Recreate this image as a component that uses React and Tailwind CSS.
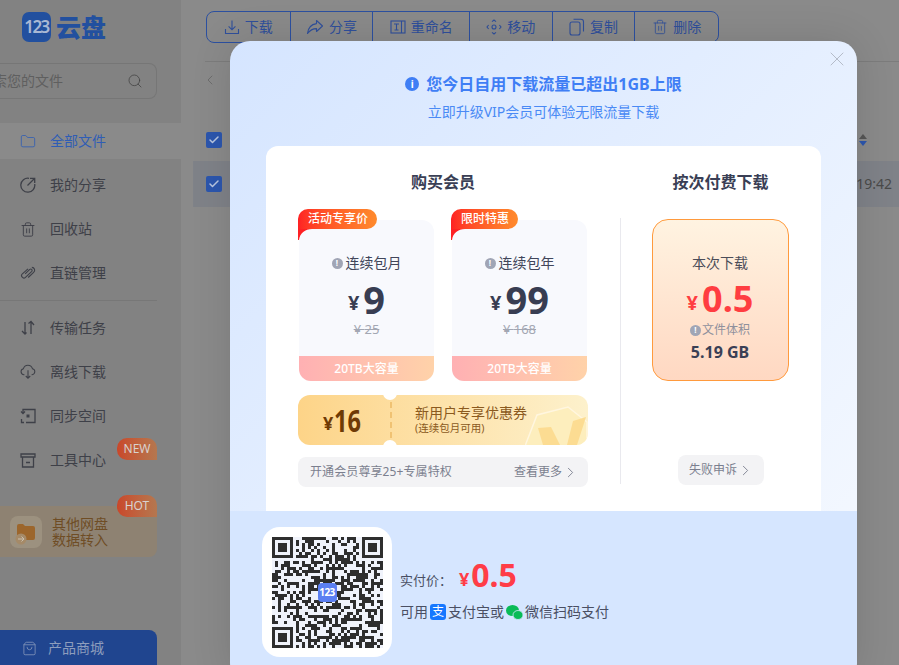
import React from 'react';
import {
  Check, ChevronLeft, ChevronRight, Folder, Search, ShoppingBag, Trash2, X,
} from 'lucide-react';

const FONT = { fontFamily: '"Noto Sans", "Noto Sans CJK SC", sans-serif' };

const DownloadIcon = () => (
  <svg width="16" height="16" viewBox="0 0 16 16" fill="none" stroke="currentColor" strokeWidth="1.1">
    <path d="M8 1.5v9M4.6 7.4 8 10.8l3.4-3.4M1.5 10v4.5h13V10" />
  </svg>
);
const ShareIcon = () => (
  <svg width="18" height="16" viewBox="0 0 18 16" fill="none" stroke="currentColor" strokeWidth="1.1" strokeLinejoin="round">
    <path d="M10.5 1.5 16.5 7l-6 5.500V9.600C6.500 9.600 4 11 1.500 14.500 2 9.500 5 5.400 10.500 4.600z" />
  </svg>
);
const RenameIcon = () => (
  <svg width="16" height="16" viewBox="0 0 16 16" fill="none" stroke="currentColor" strokeWidth="1.1">
    <rect x="1" y="2" width="14" height="12" />
    <path d="M4 5h5M6.500 5v6M4.500 11h4M11.500 2v12" />
  </svg>
);
const MoveIcon = () => (
  <svg width="16" height="16" viewBox="0 0 16 16" fill="none" stroke="currentColor" strokeWidth="1.1">
    <path d="M6 2.600 8 1l2 1.600M13.400 6 15 8l-1.600 2M10 13.400 8 15l-2-1.600M2.600 10 1 8l1.600-2" />
    <circle cx="8" cy="8" r="2" />
  </svg>
);
const CopyIcon = () => (
  <svg width="16" height="18" viewBox="0 0 16 18" fill="none" stroke="currentColor" strokeWidth="1.1">
    <rect x="1" y="4" width="10" height="13" rx="2" />
    <path d="M4.500 1.200h7.500a2.500 2.500 0 0 1 2.500 2.500v9.800" />
  </svg>
);

const ShareNavIcon = () => (
  <svg width="16" height="16" viewBox="0 0 16 16" fill="none" stroke="currentColor" strokeWidth="1.3">
    <path d="M9 1.300A7 7 0 1 0 14.700 7" />
    <path d="M7.500 8.500 14.500 1.500M10 1.300h4.700V6" />
  </svg>
);
const LinkNavIcon = () => (
  <svg width="17" height="14" viewBox="0 0 17 14" fill="none" stroke="currentColor" strokeWidth="1.200">
    <path d="M8.500 2.600 2.500 8a2.400 2.400 0 0 0 3.300 3.600l6.700-6.400a1.500 1.500 0 0 0-2.100-2.100L5.500 8" />
    <path d="M8.700 11.800 14.500 6.300A3 3 0 0 0 12.600 1" />
  </svg>
);
const TransferIcon = () => (
  <svg width="16" height="16" viewBox="0 0 16 16" fill="none" stroke="currentColor" strokeWidth="1.300">
    <path d="M5 2v12M2 11l3 3 1.500-1.500M11 14V2M8.500 3.500 11 1.500 14 5" />
  </svg>
);
const CloudIcon = () => (
  <svg width="18" height="16" viewBox="0 0 18 16" fill="none" stroke="currentColor" strokeWidth="1.200">
    <path d="M5 11H4.400A3.400 3.400 0 0 1 3.800 4.300 5.300 5.300 0 0 1 14 4.300 3.400 3.400 0 0 1 13.600 11H13" />
    <path d="M9 6v9M6.500 12.500 9 15l2.500-2.500" />
  </svg>
);
const SyncIcon = () => (
  <svg width="16" height="16" viewBox="0 0 16 16" fill="none" stroke="currentColor" strokeWidth="1.300">
    <path d="M3 5V1.500h12v13H6M1.500 11v3.500H4" />
    <path d="M1 3.500 3 5.500 5 3.500" />
    <rect x="6.500" y="6.500" width="3" height="3" fill="currentColor" stroke="none" />
  </svg>
);
const ToolboxIcon = () => (
  <svg width="16" height="15" viewBox="0 0 16 15" fill="none" stroke="currentColor" strokeWidth="1.300">
    <path d="M1 1h14v3H1zM2.500 4v10h11V4M6 9.500h4" />
  </svg>
);

// small round "!" used next to plan names
const Dot = () => (
  <span className="inline-flex h-[11px] w-[11px] items-center justify-center rounded-full bg-[#a0a5b5] text-[8px] font-bold leading-none text-white">!</span>
);

const Plan = ({ badge, badgeW, name, price, old }) => (
  <div className="relative flex h-[161px] w-[135px] flex-col rounded-xl bg-[#f8f9fd]">
    <svg className="absolute left-[-1px] top-[9px]" width="14" height="11" viewBox="0 0 14 11">
      <path d="M0 0h14C7 0 2 4 1 11H0z" fill="#fe2124" />
    </svg>
    <div
      className="absolute left-[-1px] top-[-11px] h-5 rounded-tl-xl rounded-tr-xl rounded-br-xl bg-gradient-to-r from-[#fe2124] to-[#ff8a2c] pl-px text-center text-xs font-medium leading-5 text-white"
      style={{ width: badgeW }}
    >
      {badge}
    </div>
    <div className="mt-[33px] flex h-5 items-center justify-center gap-[3px] text-sm text-[#41465a]">
      <Dot />
      {name}
    </div>
    <div className="mt-1 flex h-[43px] items-center justify-center gap-[4px] font-bold text-[#383d52]">
      <span className="mt-2 text-xl leading-none">¥</span>
      <span className="text-[38px] leading-none">{price}</span>
    </div>
    <div className="text-center text-[13px] leading-[18px] text-[#a3a7b3] line-through">¥ {old}</div>
    <div className="mt-auto h-[25px] rounded-b-xl bg-gradient-to-r from-[#ffb0b3] to-[#ffd2a9] text-center text-xs font-medium leading-[25px] text-white">
      20TB大容量
    </div>
  </div>
);

const NavItem = ({ icon, label, active, children }) => (
  <div className={`relative flex h-11 items-center gap-[14px] pl-5 text-sm ${active ? 'text-[#2f5db5]' : 'text-[#3e4048]'}`}>
    <span className="flex w-4 justify-center">{icon}</span>
    {label}
    {children}
  </div>
);

const Tag = ({ text, className }) => (
  <span className={`absolute left-[117px] flex h-[22px] w-10 items-center justify-center rounded-tl-[10px] rounded-tr-[10px] rounded-bl-[10px] bg-gradient-to-r from-[#c9472a] to-[#b4774f] text-xs text-[#d9d2cf] ${className}`}>
    {text}
  </span>
);

const TOOLS = [
  { label: '下载', w: 'w-[83px]', icon: <DownloadIcon /> },
  { label: '分享', w: 'w-[83px]', icon: <ShareIcon /> },
  { label: '重命名', w: 'w-[97px]', icon: <RenameIcon /> },
  { label: '移动', w: 'w-[83px]', icon: <MoveIcon /> },
  { label: '复制', w: 'w-[83px]', icon: <CopyIcon /> },
  { label: '删除', w: 'w-[84px]', icon: <Trash2 size={16} strokeWidth={1.2} /> },
];

// fake qr matrix, seeded so every render gives the same picture
const buildQr = () => {
  const size = 37;
  const cells = [];
  let seed = 123;
  const inFinder = (x, y) =>
    (x < 8 && y < 8) || (x > size - 9 && y < 8) || (x < 8 && y > size - 9);
  for (let y = 0; y < size; y++) {
    for (let x = 0; x < size; x++) {
      seed = (seed * 1103515245 + 12345) & 0x7fffffff;
      if (!inFinder(x, y) && (seed >> 16) % 100 < 52) cells.push([x, y]);
    }
  }
  return cells;
};

const Finder = ({ x, y }) => (
  <g>
    <rect x={x} y={y} width="7" height="7" fill="#2e2e2e" />
    <rect x={x + 1} y={y + 1} width="5" height="5" fill="#f0f3fb" />
    <rect x={x + 2} y={y + 2} width="3" height="3" fill="#2e2e2e" />
  </g>
);

const Qr = () => (
  <div className="relative h-[111px] w-[111px]">
    <svg width="111" height="111" viewBox="0 0 37 37" shapeRendering="crispEdges">
      <rect width="37" height="37" fill="#f0f3fb" />
      {buildQr().map(([x, y]) => (
        <rect key={`${x}-${y}`} x={x} y={y} width="1" height="1" fill="#2e2e2e" />
      ))}
      <Finder x={0} y={0} />
      <Finder x={30} y={0} />
      <Finder x={0} y={30} />
    </svg>
    <div className="absolute left-[46px] top-[46px] flex h-[19px] w-[19px] items-center justify-center rounded-[4px] bg-[#5b7ff2] text-[10px] font-bold tracking-[-0.5px] text-white">
      123
    </div>
  </div>
);

export default function App() {
  return (
    <div className="relative flex h-[665px] w-[899px] overflow-hidden bg-[#8a8a8a]" style={FONT}>
      {/* Sidebar */}
      <aside className="flex h-full w-[181px] shrink-0 flex-col bg-[#828282]">
        <div className="ml-[22px] mt-3 flex h-[30px] items-center gap-[5px]">
          <div className="flex h-[30px] w-[29px] items-center justify-center rounded-[7px] bg-[#22509f] text-[17px] font-semibold tracking-[-1.5px] text-[#a9b8d4]">
            123
          </div>
          <span className="text-[25px] font-black leading-none text-[#22509f]">云盘</span>
        </div>

        <div className="mt-[21px] flex h-9 w-[157px] shrink-0 items-center justify-between overflow-hidden rounded-r-lg border border-l-0 border-[#767676] pr-[13px] text-sm text-[#5f5f5f]">
          <span className="ml-[-21px] whitespace-nowrap">搜索您的文件</span>
          <Search size={16} strokeWidth={1.2} className="text-[#444]" />
        </div>

        <nav className="mt-5">
          <div className="relative">
            <div className="absolute left-0 right-0 top-1 h-9 bg-[#8a8a8a]" />
            <NavItem active icon={<Folder size={17} strokeWidth={1.2} />} label="全部文件" />
          </div>
          <NavItem icon={<ShareNavIcon />} label="我的分享" />
          <NavItem icon={<Trash2 size={17} strokeWidth={1.4} />} label="回收站" />
          <NavItem icon={<LinkNavIcon />} label="直链管理" />
          <div className="my-[5px] h-px w-[157px] bg-[#777]" />
          <NavItem icon={<TransferIcon />} label="传输任务" />
          <NavItem icon={<CloudIcon />} label="离线下载" />
          <NavItem icon={<SyncIcon />} label="同步空间" />
          <NavItem icon={<ToolboxIcon />} label="工具中心">
            <Tag text="NEW" className="top-0" />
          </NavItem>
        </nav>

        <div className="relative mt-6 flex h-[51px] w-[157px] shrink-0 items-center gap-[10px] rounded-r-lg bg-[#8e8272] pl-[10px] text-sm leading-4 text-[#6f4d25]">
          <Tag text="HOT" className="top-[-11px]" />
          <div className="relative flex h-8 w-8 items-center justify-center rounded-lg bg-[#9c917f]">
            <svg width="18" height="16" viewBox="0 0 18 16">
              <path d="M0 2a2 2 0 0 1 2-2h4l2 2h8a2 2 0 0 1 2 2v10a2 2 0 0 1-2 2H2a2 2 0 0 1-2-2z" fill="#9c662c" />
            </svg>
            <svg className="absolute bottom-[3px] left-[5px]" width="12" height="12" viewBox="0 0 12 12" fill="none" stroke="#c9bfae" strokeWidth="1">
              <circle cx="6" cy="6" r="5.500" fill="#a58a68" stroke="none" />
              <path d="M3 6h6M6.500 3.500 9 6 6.500 8.500" />
            </svg>
          </div>
          <div>其他网盘<br />数据转入</div>
        </div>

        <div className="mt-[73px] flex h-10 w-[157px] shrink-0 items-start gap-[11px] rounded-tr-lg bg-[#20458f] pl-[22px] pt-2 text-sm text-[#8d9dbd]">
          <ShoppingBag size={15} strokeWidth={1.2} className="mt-[3px]" />
          产品商城
        </div>
      </aside>

      {/* File list behind the dialog */}
      <main className="flex-1">
        <div className="ml-[25px] mt-[11px] flex h-8 w-[513px] rounded-lg border border-[#2c50a0] text-sm text-[#2f4f9b]">
          {TOOLS.map((t, i) => (
            <div key={t.label} className={`flex ${t.w} items-center justify-center gap-[5px] ${i > 0 ? 'border-l border-[#2c50a0]' : ''}`}>
              {t.icon}
              {t.label}
            </div>
          ))}
        </div>
        <div className="ml-6 mt-[18px] h-px bg-[#7c7c7c]" />
        <ChevronLeft size={16} strokeWidth={1.2} className="ml-[21px] mt-[10px] text-[#666]" />
        <div className="ml-[25px] mt-[43px] flex h-[18px] items-center justify-between pr-[31px]">
          <span className="flex h-4 w-4 items-center justify-center rounded-[2px] bg-[#2c56ad] text-[#b9c6e0]">
            <Check size={12} strokeWidth={3} />
          </span>
          <svg width="10" height="14" viewBox="0 0 10 14">
            <path d="M5 1 9 6H1z" fill="#555" />
            <path d="M5 13 1 8h8z" fill="#2c56ad" />
          </svg>
        </div>
        <div className="ml-3 mt-3 flex h-[46px] items-center justify-between bg-[#7f8288] pl-[13px] pr-[7px] text-sm text-[#4a4a4a]">
          <span className="flex h-4 w-4 items-center justify-center rounded-[2px] bg-[#2c56ad] text-[#b9c6e0]">
            <Check size={12} strokeWidth={3} />
          </span>
          19:42
        </div>
      </main>

      {/* Dialog */}
      <section className="absolute left-[230px] top-[41px] flex h-[640px] w-[627px] flex-col overflow-hidden rounded-[20px] bg-gradient-to-br from-[#d5e5ff] to-[#f7faff] shadow-[0_0_40px_rgba(0,0,0,0.12)]">
        <X size={24} strokeWidth={1} className="absolute right-2 top-[6px] text-[#b5bcc9]" />
        <div className="mt-[31px] flex h-6 items-center justify-center gap-[7px] text-base font-bold text-[#3f7ef5]">
          <span className="flex h-[14px] w-[14px] items-center justify-center rounded-full bg-[#3f7ef5] text-[10px] leading-none text-white">i</span>
          您今日自用下载流量已超出1GB上限
        </div>
        <div className="mt-[6px] text-center text-sm leading-5 text-[#4a8af5]">立即升级VIP会员可体验无限流量下载</div>

        <div className="mx-9 mt-[24px] flex h-[365px] shrink-0 rounded-t-xl bg-white pl-8">
          {/* Membership */}
          <div className="w-[290px]">
            <h2 className="mt-[26px] h-5 text-center text-base font-semibold leading-5 text-[#3a3f55]">购买会员</h2>
            <div className="ml-px mt-[28px] flex gap-[18px]">
              <Plan badge="活动专享价" badgeW={79} name="连续包月" price="9" old="25" />
              <Plan badge="限时特惠" badgeW={67} name="连续包年" price="99" old="168" />
            </div>
            <div className="relative mt-[14px] flex h-[50px] overflow-hidden rounded-xl bg-gradient-to-r from-[#fdd488] to-[#fdf1cc]">
              <div className="flex w-[92px] items-center pl-[25px] font-bold text-[#6f3a05]">
                <span className="mt-[6px] text-lg leading-none">¥</span>
                <span className="ml-px inline-block origin-left scale-x-[0.76] text-[31px] leading-none">16</span>
              </div>
              <div className="my-[7px] border-l-2 border-dashed border-[#f0c273]" />
              <div className="ml-[23px] mt-[9px] text-[#8b5a1e]">
                <div className="text-sm leading-[18px]">新用户专享优惠券</div>
                <div className="text-[10.5px] leading-[13px]">(连续包月可用)</div>
              </div>
              <span className="absolute left-[85px] top-[-9px] h-[14px] w-[14px] rounded-full bg-white" />
              <span className="absolute bottom-[-9px] left-[85px] h-[14px] w-[14px] rounded-full bg-white" />
              <svg className="absolute bottom-0 right-0" width="63" height="40" viewBox="0 0 63 40">
                <path d="M0 41 12 10 43 2 62 17V41z" fill="#fdeebd" stroke="#fff6df" strokeWidth="1.500" />
                <path d="M13 23 26 22 35 40H18z" fill="#fcdc92" />
                <path d="M48 16 61 12 52 40H42z" fill="#fcdc92" />
              </svg>
            </div>
            <div className="mt-3 flex h-[30px] items-center justify-between rounded-lg bg-[#f3f3f5] pl-3 pr-[9px] text-xs text-[#7b7f8f]">
              <span className="tracking-[0.1px]">开通会员尊享25+专属特权</span>
              <span className="flex items-center">查看更多<ChevronRight size={17} strokeWidth={1.3} /></span>
            </div>
          </div>

          <div className="ml-8 mt-[72px] h-[266px] w-px bg-[#e9e9ee]" />

          {/* Pay per download */}
          <div className="flex flex-1 flex-col items-center pr-[2px]">
            <h2 className="ml-px mt-[26px] h-5 text-base font-semibold leading-5 text-[#3a3f55]">按次付费下载</h2>
            <div className="mt-[27px] flex h-[162px] w-[137px] flex-col items-center rounded-2xl border border-[#ff9a3d] bg-gradient-to-b from-[#fff3e1] to-[#ffd8c2]">
              <div className="mt-[33px] h-5 text-sm leading-5 text-[#4b4c58]">本次下载</div>
              <div className="mt-[5px] flex h-[41px] items-center gap-[4px] font-bold text-[#ff3d41]">
                <span className="mt-2 text-xl leading-none">¥</span>
                <span className="text-[36px] leading-none">0.5</span>
              </div>
              <div className="mt-px flex h-5 items-center gap-[1px] text-xs text-[#8f909c]">
                <Dot />
                文件体积
              </div>
              <div className="mt-[2px] text-base font-bold leading-5 text-[#3a3f55]">5.19 GB</div>
            </div>
            <div className="ml-[2px] mt-[74px] flex h-[30px] w-[86px] items-center justify-center rounded-lg bg-[#f3f3f5] pl-px text-xs text-[#7b7f8f]">
              失败申诉
              <ChevronRight size={17} strokeWidth={1.3} />
            </div>
          </div>
        </div>

        {/* Pay bar */}
        <div className="flex flex-1 items-start bg-[#d6e6ff] pl-8 pt-4">
          <div className="flex h-[130px] w-[130px] items-center justify-center rounded-[18px] bg-white">
            <Qr />
          </div>
          <div className="ml-2 text-sm text-[#4a4f63]">
            <div className="mt-[30px] flex h-[36px] items-center">
              <span className="mt-[10px] w-[59px] text-[13px]">实付价：</span>
              <span className="mt-[8px] text-lg font-bold leading-none text-[#ff3d47]">¥</span>
              <span className="ml-[2px] text-[32px] font-bold leading-none text-[#ff3d47]">0.5</span>
            </div>
            <div className="mt-[9px] flex h-5 items-center">
              可用
              <span className="mx-[2px] flex h-4 w-4 items-center justify-center rounded-[3px] bg-[#1677ff] text-xs leading-none text-white">支</span>
              支付宝或
              <svg className="mx-[2px]" width="17" height="15" viewBox="0 0 17 15">
                <ellipse cx="6.500" cy="5.500" rx="6.500" ry="5.500" fill="#09bb57" />
                <ellipse cx="12" cy="10" rx="5" ry="4.500" fill="#09bb57" stroke="#d6e6ff" strokeWidth="0.800" />
              </svg>
              微信扫码支付
            </div>
          </div>
        </div>
      </section>
    </div>
  );
}
